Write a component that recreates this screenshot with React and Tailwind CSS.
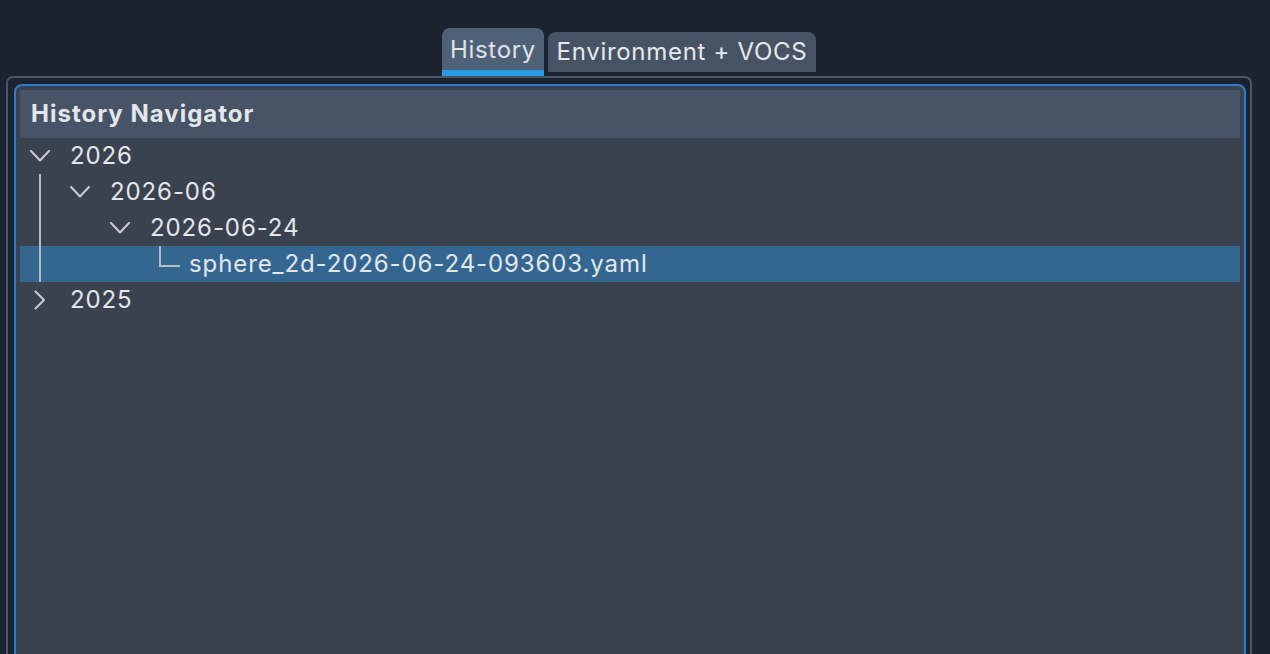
import React from 'react'

const font = { fontFamily: 'Inter, "Noto Sans", sans-serif' }

const ChevronDown = () => (
  <svg width="20" height="12" viewBox="0 0 20 12" fill="none">
    <path d="M1 1 L10 10.5 L19 1" stroke="#c9ccd1" strokeWidth="2" strokeLinecap="round" strokeLinejoin="round" />
  </svg>
)

const ChevronRight = () => (
  <svg width="12" height="20" viewBox="0 0 12 20" fill="none">
    <path d="M1.5 1.5 L10 10 L1.5 18.5" stroke="#c9ccd1" strokeWidth="2" strokeLinecap="round" strokeLinejoin="round" />
  </svg>
)

// одна ячейка отступа дерева, 40px
const Cell = ({ children }) => (
  <div className="w-[40px] h-full flex items-center justify-center shrink-0">{children}</div>
)

const Guide = () => (
  <div className="w-[40px] h-full flex justify-center shrink-0">
    <div className="w-[2px] h-full bg-[#b9bdc3]" />
  </div>
)

const rows = [
  { label: '2026', level: 0, open: true, guide: false },
  { label: '2026-06', level: 1, open: true, guide: true },
  { label: '2026-06-24', level: 2, open: true, guide: true },
  { label: 'sphere_2d-2026-06-24-093603.yaml', level: 3, leaf: true, guide: true, selected: true },
  { label: '2025', level: 0, open: false, guide: false },
]

const TreeRow = ({ row }) => {
  const cells = []
  for (let i = 0; i < row.level; i++) {
    if (i === 0 && row.guide) cells.push(<Guide key={i} />)
    else cells.push(<Cell key={i} />)
  }
  return (
    <div className={`h-[36px] flex items-stretch ${row.selected ? 'bg-[#336791]' : ''}`}>
      {cells}
      {row.leaf ? (
        <div className="w-[40px] h-full shrink-0">
          <div className="ml-[19px] w-[2px] h-[19px] bg-[#b9bdc3]" />
          <div className="ml-[19px] w-[21px] h-[2px] bg-[#b9bdc3]" />
        </div>
      ) : (
        <Cell>{row.open ? <ChevronDown /> : <ChevronRight />}</Cell>
      )}
      <div className={`flex items-center text-[24px] tracking-[0.9px] text-[#e4e6ea] ${row.leaf ? 'ml-[9px]' : 'ml-[10px]'}`}>
        {row.label}
      </div>
    </div>
  )
}

export default function App() {
  return (
    <div className="w-[1270px] h-[654px] bg-[#1b232e] overflow-hidden" style={font}>
      <div className="ml-[6px] w-[1246px] pt-[28px] flex justify-center gap-[4px]">
        <div className="w-[102px] h-[48px] rounded-t-[8px] bg-[#4f6176] flex flex-col">
          <div className="flex-1 flex items-center justify-center text-[24px] tracking-[0.7px] text-[#dfe3e8] pt-[1px]">History</div>
          <div className="h-[6px] bg-[#2b9be8]" />
        </div>
        <div className="mt-[4px] w-[268px] h-[40px] rounded-t-[8px] bg-[#465365] flex items-center justify-center text-[24px] tracking-[0.7px] text-[#e6e8eb]">
          Environment + VOCS
        </div>
      </div>
      <div className="ml-[6px] w-[1246px] h-[600px] border-2 border-b-0 border-[#4a5567] rounded-t-[7px] pt-[6px] pl-[6px] pr-[4px]">
        <div className="h-full border-2 border-[#2a7dcb] rounded-t-[8px] bg-[#3a4250] p-[4px] pb-0">
          <div className="h-[48px] bg-[#475467] flex items-center pl-[11px] text-[24px] tracking-[1px] font-bold text-[#e4e6ea]">
            History Navigator
          </div>
          {rows.map((row) => (
            <TreeRow key={row.label} row={row} />
          ))}
        </div>
      </div>
    </div>
  )
}
